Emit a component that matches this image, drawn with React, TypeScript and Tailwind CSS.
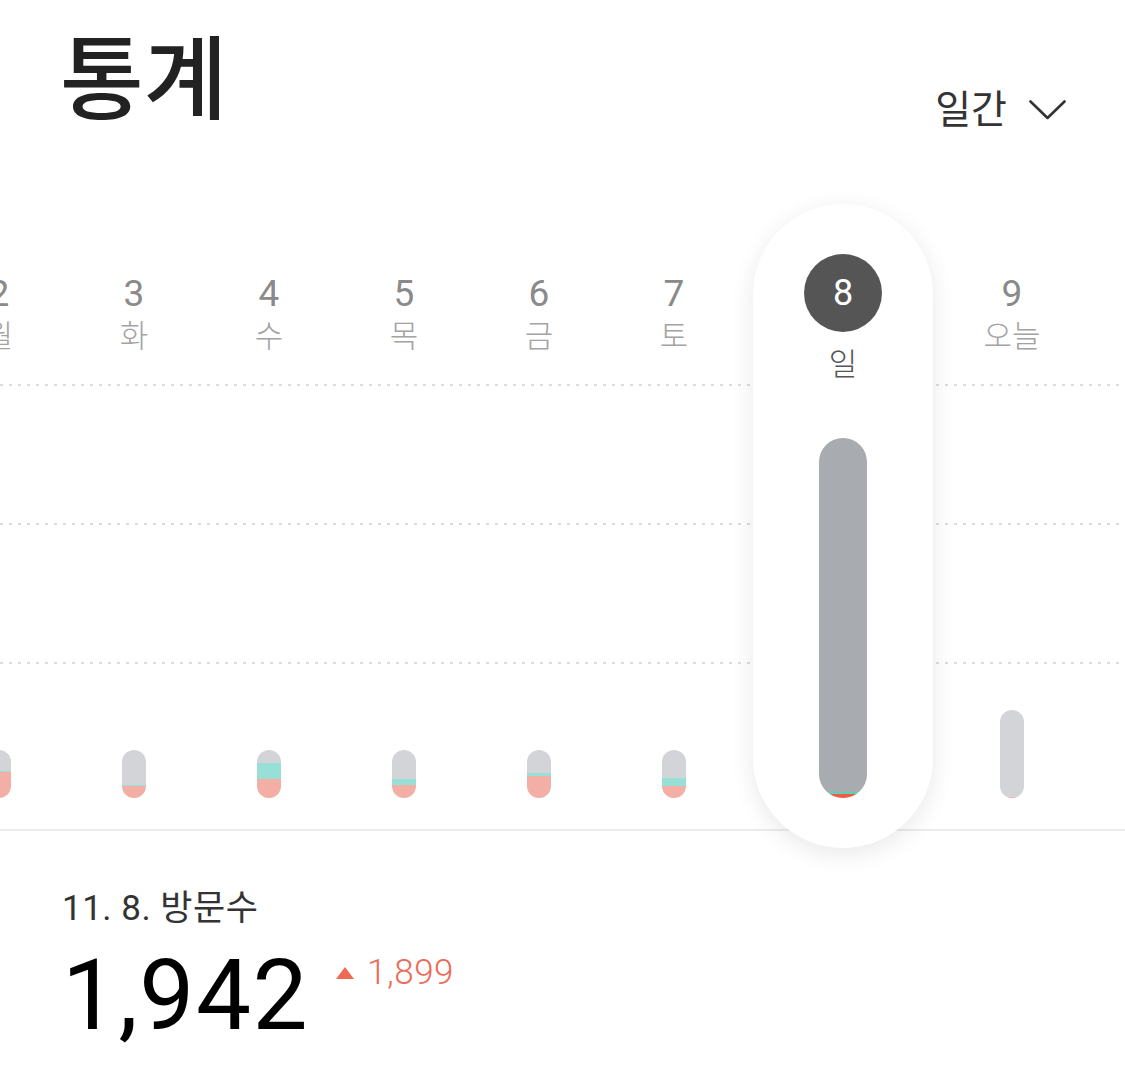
import React from 'react'

interface Day {
  date: string;
  weekday: string;
  total: number; // bar height in px
  teal: number;
  red: number;
  selected?: boolean;
}

const days: Day[] = [
  { date: '2', weekday: '월', total: 48, teal: 1, red: 26 },
  { date: '3', weekday: '화', total: 48, teal: 1.5, red: 12 },
  { date: '4', weekday: '수', total: 48, teal: 16, red: 19 },
  { date: '5', weekday: '목', total: 48, teal: 6, red: 13 },
  { date: '6', weekday: '금', total: 48, teal: 3, red: 22 },
  { date: '7', weekday: '토', total: 48, teal: 8, red: 12 },
  { date: '8', weekday: '일', total: 360, teal: 2, red: 4, selected: true },
  { date: '9', weekday: '오늘', total: 88, teal: 0, red: 1 },
]

const Bar: React.FC<{ day: Day }> = ({ day }) => {
  const big = day.selected
  return (
    <div
      className={`${big ? 'w-[48px]' : 'w-[24px]'} rounded-full overflow-hidden flex flex-col`}
      style={{ height: day.total }}
    >
      <div className={`flex-1 ${big ? 'bg-[#a8abaf]' : 'bg-[#d3d4d8]'}`} />
      <div className={big ? 'bg-[#5fcfb5]' : 'bg-[#98dfd5]'} style={{ height: day.teal }} />
      <div className={big ? 'bg-[#ef5b45]' : 'bg-[#f3aea5]'} style={{ height: day.red }} />
    </div>
  )
}

const DayColumn: React.FC<{ day: Day }> = ({ day }) => {
  if (day.selected) {
    return (
      <div className="w-[203px] shrink-0 flex justify-center h-full">
        <div className="relative z-10 w-[180px] h-[644px] shrink-0 bg-white rounded-full shadow-[0_6px_24px_rgba(0,0,0,0.09)] flex flex-col items-center pt-[50px] pb-[50px]">
          <div className="w-[78px] h-[78px] rounded-full bg-[#555555] flex items-center justify-center text-white text-[36px] leading-none">
            {day.date}
          </div>
          <div className="mt-[15px] text-[#555555] text-[31px] leading-[36px] font-light">
            {day.weekday}
          </div>
          <div className="flex-1" />
          <Bar day={day} />
        </div>
      </div>
    )
  }
  return (
    <div className="w-[135px] shrink-0 flex flex-col items-center h-full pt-[70px] pb-[31px]">
      <div className="text-[#8a8a8a] text-[37px] leading-[40px]">{day.date}</div>
      <div className="mt-[5px] text-[#a3a3a3] text-[31px] leading-[36px] font-light">{day.weekday}</div>
      <div className="flex-1" />
      <Bar day={day} />
    </div>
  )
}

export default function App() {
  return (
    <div className="w-[1125px] h-[1065px] bg-white overflow-hidden font-['Roboto','Noto_Sans_CJK_KR',sans-serif]">
      <header className="flex items-end justify-between pl-[60px] pr-[59px] pt-[26px]">
        <h1 className="text-[#222222] text-[91px] leading-[110px] font-medium">통계</h1>
        <button className="flex items-center gap-[22px] text-[#333333] text-[39px] leading-[50px] mb-[1px]">
          일간
          <svg width="37" height="20" viewBox="0 0 37 20" fill="none">
            <polyline points="1.5,1.5 18.5,18 35.5,1.5" stroke="#333333" strokeWidth="2.6" strokeLinecap="round" strokeLinejoin="round" />
          </svg>
        </button>
      </header>

      {/* chart */}
      <section className="relative mt-[68px] h-[627px] border-b-2 border-[#ececec]">
        <div className="absolute inset-x-0 top-[180px] h-[2px] bg-[linear-gradient(to_right,#dcdcdc_3px,transparent_3px)] bg-[length:9px_2px]" />
        <div className="absolute inset-x-0 top-[319px] h-[2px] bg-[linear-gradient(to_right,#dcdcdc_3px,transparent_3px)] bg-[length:9px_2px]" />
        <div className="absolute inset-x-0 top-[458px] h-[2px] bg-[linear-gradient(to_right,#dcdcdc_3px,transparent_3px)] bg-[length:9px_2px]" />
        <div className="relative flex h-[625px] ml-[-68.5px]">
          {days.map((d) => (
            <DayColumn key={d.date} day={d} />
          ))}
        </div>
      </section>

      {/* summary */}
      <div className="pl-[62px] pt-[58px]">
        <div className="text-[#333333] text-[35px] leading-[40px] tracking-[0.5px]">11. 8. 방문수</div>
        <div className="flex items-start mt-[18px]">
          <div className="text-black text-[98px] leading-[97px] tracking-[1.5px]">1,942</div>
          <div className="flex items-center ml-[27px] mt-[6px] text-[#ec6a57]">
            <svg width="18" height="12" viewBox="0 0 18 12" className="mr-[13px]">
              <polygon points="9,0 18,12 0,12" fill="#ee6a55" />
            </svg>
            <span className="text-[35px] leading-[40px] font-light tracking-[0.5px]">1,899</span>
          </div>
        </div>
      </div>
    </div>
  )
}
